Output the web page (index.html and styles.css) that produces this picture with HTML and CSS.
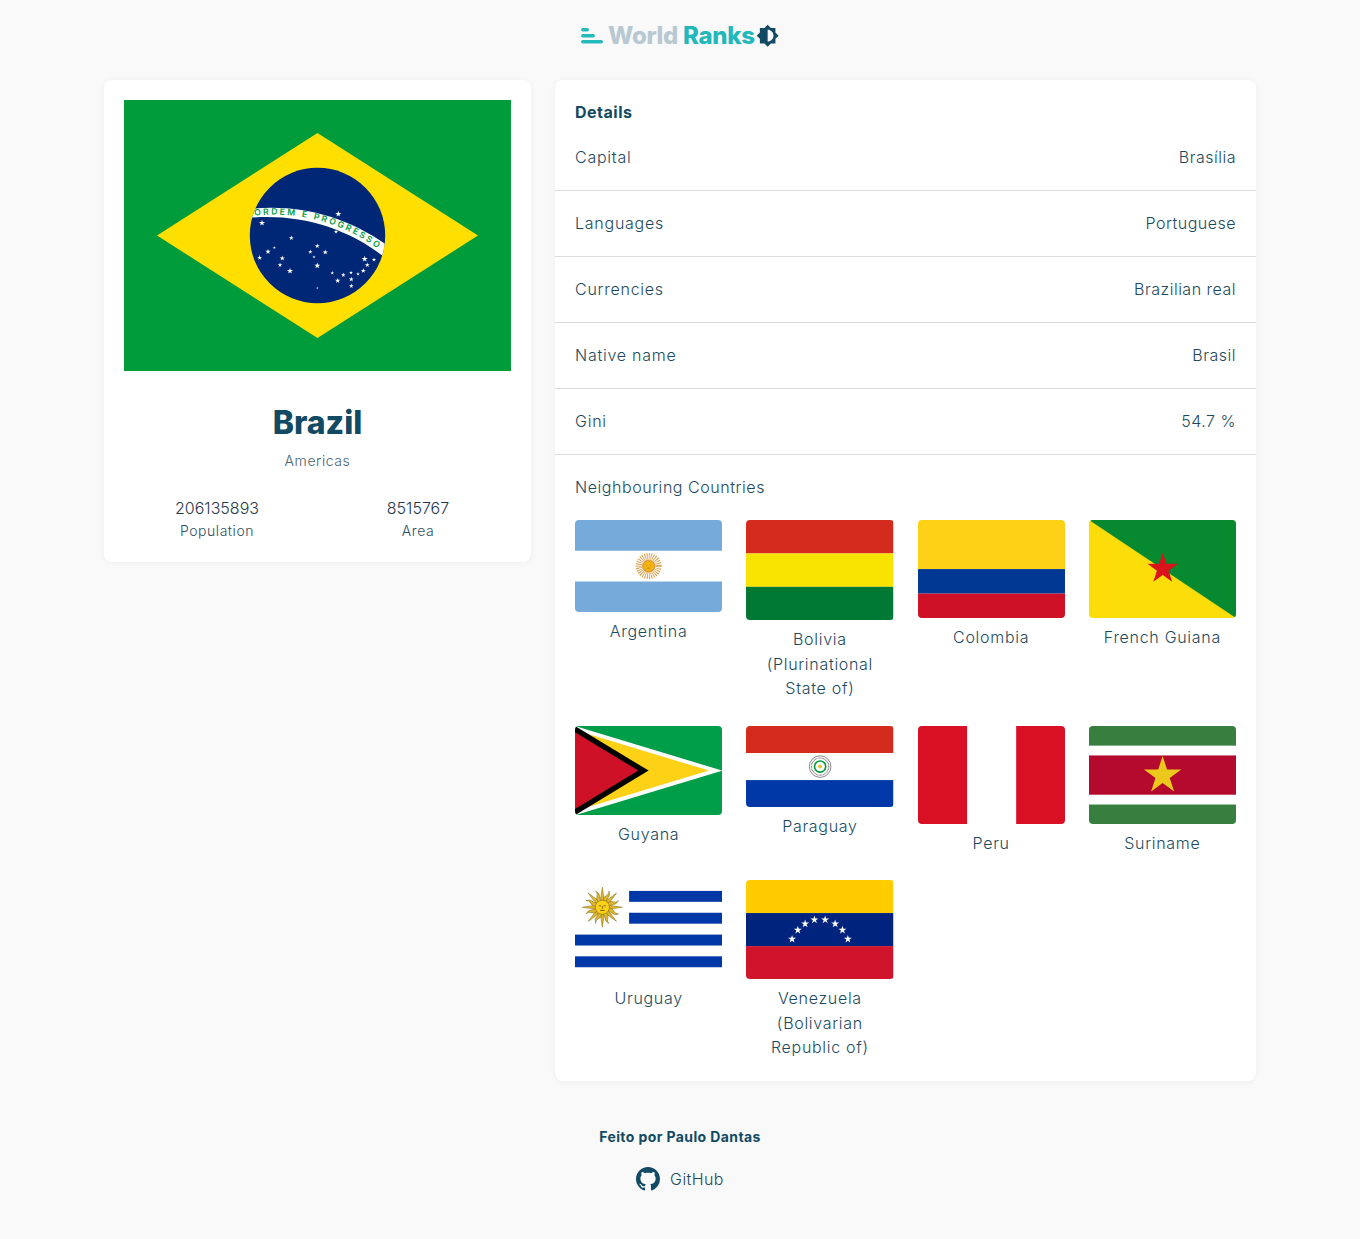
FILE: index.html
```html
<!DOCTYPE html>
<html lang="en">
<head>
<meta charset="utf-8">
<title>World Ranks</title>
<link rel="stylesheet" href="styles.css">
</head>
<body>
<header class="header">
  <div class="logo">
    <svg class="logo-bars" viewBox="0 0 22 16" aria-hidden="true"><rect x="0" y="0" width="8" height="3.6" rx="1.8"/><rect x="0" y="6" width="14" height="3.6" rx="1.8"/><rect x="0" y="12" width="22" height="3.6" rx="1.8"/></svg>
    <span class="logo-text"><span class="logo-world">World</span> <span class="logo-ranks">Ranks</span></span>
    <svg class="logo-theme" viewBox="0 0 24 24" aria-hidden="true"><path d="M20 15.31L23.31 12 20 8.69V4h-4.69L12 .69 8.69 4H4v4.69L.69 12 4 15.31V20h4.69L12 23.31 15.31 20H20v-4.69zM12 18V6c3.31 0 6 2.69 6 6s-2.69 6-6 6z"/></svg>
  </div>
</header>

<main class="main">
  <section class="card summary">
    <svg class="hero-flag" viewBox="0 0 387 271" role="img" aria-label="Brazil flag">
      <defs>
        <polygon id="star" points="0,-1 .2245,-.309 .951,-.309 .363,.118 .588,.809 0,.382 -.588,.809 -.363,.118 -.951,-.309 -.2245,-.309"/>
        <clipPath id="globe"><circle cx="193.5" cy="135.5" r="67.7"/></clipPath>
        <path id="motto" d="M130.5 115.8 C172 110.5 222 122.5 258.5 152.5"/>
      </defs>
      <rect width="387" height="271" fill="#009b3a"/>
      <polygon points="33,135.5 193.5,33 354,135.5 193.5,238" fill="#fedf00"/>
      <circle cx="193.5" cy="135.5" r="67.7" fill="#002776"/>
      <g clip-path="url(#globe)">
        <path d="M125 109 C172 103.5 222 115 264 146 L260 157 C222 126.5 172 113 123 118 Z" fill="#fff"/>
      </g>
      <text class="motto"><textPath href="#motto" textLength="130">ORDEM E PROGRESSO</textPath></text>
      <g fill="#fff">
        <use href="#star" transform="translate(214.3 114) scale(3.2)"/>
        <use href="#star" transform="translate(138 123) scale(3.2)"/>
        <use href="#star" transform="translate(212 131.7) scale(2.2)"/>
        <use href="#star" transform="translate(167.3 138) scale(2.6)"/>
        <use href="#star" transform="translate(193.3 146) scale(2.6)"/>
        <use href="#star" transform="translate(150.3 147.7) scale(1.6)"/>
        <use href="#star" transform="translate(144 151.7) scale(2.8)"/>
        <use href="#star" transform="translate(186.3 152) scale(2.2)"/>
        <use href="#star" transform="translate(201.3 152.3) scale(2.8)"/>
        <use href="#star" transform="translate(190 157) scale(1.6)"/>
        <use href="#star" transform="translate(135.7 157.7) scale(2.6)"/>
        <use href="#star" transform="translate(158.3 158.3) scale(2.8)"/>
        <use href="#star" transform="translate(240.7 159) scale(3.2)"/>
        <use href="#star" transform="translate(250 159.7) scale(2.2)"/>
        <use href="#star" transform="translate(243.3 165) scale(2.6)"/>
        <use href="#star" transform="translate(156 165) scale(2.4)"/>
        <use href="#star" transform="translate(193.3 165.7) scale(3.2)"/>
        <use href="#star" transform="translate(239.3 170.7) scale(2.6)"/>
        <use href="#star" transform="translate(166 171) scale(3.2)"/>
        <use href="#star" transform="translate(208.3 173) scale(2)"/>
        <use href="#star" transform="translate(227 172.7) scale(2)"/>
        <use href="#star" transform="translate(219.3 175) scale(2.4)"/>
        <use href="#star" transform="translate(234 174) scale(2)"/>
        <use href="#star" transform="translate(227.3 179.3) scale(2.6)"/>
        <use href="#star" transform="translate(213.7 180.7) scale(2.8)"/>
        <use href="#star" transform="translate(227.3 186) scale(2.4)"/>
        <use href="#star" transform="translate(193.3 188) scale(1.2)"/>
      </g>
    </svg>
    <h1 class="country-name">Brazil</h1>
    <p class="region">Americas</p>
    <div class="stats">
      <div class="stat"><span class="stat-value">206135893</span><span class="stat-label">Population</span></div>
      <div class="stat"><span class="stat-value">8515767</span><span class="stat-label">Area</span></div>
    </div>
  </section>

  <section class="card details">
    <h2 class="details-title">Details</h2>
    <dl class="rows">
      <div class="row"><dt>Capital</dt><dd>Brasília</dd></div>
      <div class="row"><dt>Languages</dt><dd>Portuguese</dd></div>
      <div class="row"><dt>Currencies</dt><dd>Brazilian real</dd></div>
      <div class="row"><dt>Native name</dt><dd>Brasil</dd></div>
      <div class="row"><dt>Gini</dt><dd>54.7 %</dd></div>
    </dl>
    <h3 class="neighbours-title">Neighbouring Countries</h3>
    <div class="neighbours">
      <figure class="neighbour">
        <svg class="flag" viewBox="0 0 147 92" role="img" aria-label="Argentina flag">
          <rect width="147" height="92" fill="#75aadb"/><rect y="30.7" width="147" height="30.7" fill="#fff"/>
          <circle cx="73.5" cy="46" r="9.8" fill="none" stroke="#dca65c" stroke-width="6.4" stroke-dasharray="1 1"/>
          <circle cx="73.5" cy="46" r="6.6" fill="#e0a03a"/>
          <circle cx="73.5" cy="46" r="4.8" fill="#f6b40e"/>
          <path d="M71.5 45h1M74.5 45h1M72 48h3" stroke="#b5761b" stroke-width=".7"/>
        </svg>
        <figcaption>Argentina</figcaption>
      </figure>
      <figure class="neighbour">
        <svg class="flag" viewBox="0 0 147 100" role="img" aria-label="Bolivia flag">
          <rect width="147" height="33.4" fill="#d52b1e"/><rect y="33.4" width="147" height="33.3" fill="#f9e300"/><rect y="66.7" width="147" height="33.3" fill="#007934"/>
        </svg>
        <figcaption>Bolivia (Plurinational State of)</figcaption>
      </figure>
      <figure class="neighbour">
        <svg class="flag" viewBox="0 0 147 98" role="img" aria-label="Colombia flag">
          <rect width="147" height="49" fill="#fcd116"/><rect y="49" width="147" height="24.5" fill="#003893"/><rect y="73.5" width="147" height="24.5" fill="#ce1126"/>
        </svg>
        <figcaption>Colombia</figcaption>
      </figure>
      <figure class="neighbour">
        <svg class="flag" viewBox="0 0 147 98" role="img" aria-label="French Guiana flag">
          <rect width="147" height="98" fill="#fcdd09"/><polygon points="0,0 147,0 147,98" fill="#078930"/>
          <use href="#star" transform="translate(73.6 48.7) scale(16)" fill="#da121a"/>
        </svg>
        <figcaption>French Guiana</figcaption>
      </figure>
      <figure class="neighbour">
        <svg class="flag" viewBox="0 0 500 303" role="img" aria-label="Guyana flag">
          <rect width="500" height="303" fill="#009e49"/>
          <polygon points="0,0 500,151.5 0,303" fill="#fff"/>
          <polygon points="0,14 455,151.5 0,289" fill="#fcd116"/>
          <polygon points="0,0 250,151.5 0,303" fill="#000"/>
          <polygon points="0,21 215,151.5 0,282" fill="#ce1126"/>
        </svg>
        <figcaption>Guyana</figcaption>
      </figure>
      <figure class="neighbour">
        <svg class="flag" viewBox="0 0 147 81" role="img" aria-label="Paraguay flag">
          <rect width="147" height="27" fill="#d52b1e"/><rect y="27" width="147" height="27" fill="#fff"/><rect y="54" width="147" height="27" fill="#0038a8"/>
          <circle cx="74" cy="40.5" r="10.8" fill="#fff" stroke="#555" stroke-width=".7"/>
          <circle cx="74" cy="40.5" r="8.6" fill="none" stroke="#777" stroke-width="1.2" stroke-dasharray=".8 .6"/>
          <circle cx="74" cy="40.5" r="5.6" fill="#fff" stroke="#009b3a" stroke-width="1.6"/>
          <circle cx="74" cy="40.5" r="2" fill="#e8c432"/>
        </svg>
        <figcaption>Paraguay</figcaption>
      </figure>
      <figure class="neighbour">
        <svg class="flag" viewBox="0 0 147 98" role="img" aria-label="Peru flag">
          <rect width="147" height="98" fill="#d91023"/><rect x="49" width="49" height="98" fill="#fff"/>
        </svg>
        <figcaption>Peru</figcaption>
      </figure>
      <figure class="neighbour">
        <svg class="flag" viewBox="0 0 147 98" role="img" aria-label="Suriname flag">
          <rect width="147" height="98" fill="#377e3f"/><rect y="19.6" width="147" height="58.8" fill="#fff"/><rect y="29.4" width="147" height="39.2" fill="#b40a2d"/>
          <use href="#star" transform="translate(73.5 49.5) scale(19.6)" fill="#ecc81d"/>
        </svg>
        <figcaption>Suriname</figcaption>
      </figure>
      <figure class="neighbour">
        <svg class="flag" viewBox="0 0 147 99" role="img" aria-label="Uruguay flag">
          <rect width="147" height="99" fill="#fff"/>
          <rect x="54" y="10.9" width="93" height="10.9" fill="#0038a8"/><rect x="54" y="32.7" width="93" height="10.9" fill="#0038a8"/>
          <rect y="54.5" width="147" height="10.9" fill="#0038a8"/><rect y="76.2" width="147" height="10.9" fill="#0038a8"/>
          <g transform="translate(27.3 27.2)" fill="#e0b72c" stroke="#7d6a14" stroke-width=".5">
            <path id="ray" d="M-2 -6.5 L0 -20 L2 -6.5 Z"/>
            <use href="#ray" transform="rotate(45)"/><use href="#ray" transform="rotate(90)"/><use href="#ray" transform="rotate(135)"/><use href="#ray" transform="rotate(180)"/><use href="#ray" transform="rotate(225)"/><use href="#ray" transform="rotate(270)"/><use href="#ray" transform="rotate(315)"/>
            <path id="wray" d="M-2 -6.5 Q-3 -10 -.6 -12.5 Q1.6 -15 0 -17.5 Q3 -14 1.6 -11 Q.8 -9 2 -6.5 Z" transform="rotate(22.5)"/>
            <use href="#wray" transform="rotate(45)"/><use href="#wray" transform="rotate(90)"/><use href="#wray" transform="rotate(135)"/><use href="#wray" transform="rotate(180)"/><use href="#wray" transform="rotate(225)"/><use href="#wray" transform="rotate(270)"/><use href="#wray" transform="rotate(315)"/>
            <circle r="7" fill="#fcd116"/>
            <path d="M-3.4 -1.4h2.2M1.2 -1.4h2.2M0 -1v2.6M-2.2 3.2h4.4" fill="none" stroke="#5e4c0c" stroke-width=".8"/>
          </g>
        </svg>
        <figcaption>Uruguay</figcaption>
      </figure>
      <figure class="neighbour">
        <svg class="flag" viewBox="0 0 147 99" role="img" aria-label="Venezuela flag">
          <rect width="147" height="33" fill="#ffcc00"/><rect y="33" width="147" height="33" fill="#00247d"/><rect y="66" width="147" height="33" fill="#cf142b"/>
          <g fill="#fff">
            <use href="#star" transform="translate(46 59) scale(4.2)"/>
            <use href="#star" transform="translate(51.7 50) scale(4.2)"/>
            <use href="#star" transform="translate(59 43.7) scale(4.2)"/>
            <use href="#star" transform="translate(68.3 39.7) scale(4.2)"/>
            <use href="#star" transform="translate(79 39.7) scale(4.2)"/>
            <use href="#star" transform="translate(89 43.7) scale(4.2)"/>
            <use href="#star" transform="translate(96.3 50) scale(4.2)"/>
            <use href="#star" transform="translate(101.7 59) scale(4.2)"/>
          </g>
        </svg>
        <figcaption>Venezuela (Bolivarian Republic of)</figcaption>
      </figure>
    </div>
  </section>
</main>

<footer class="footer">
  <p class="credit">Feito por Paulo Dantas</p>
  <a class="github" href="#">
    <svg class="github-icon" viewBox="0 0 16 16" aria-hidden="true"><path d="M8 0C3.58 0 0 3.58 0 8c0 3.54 2.29 6.53 5.47 7.59.4.07.55-.17.55-.38 0-.19-.01-.82-.01-1.49-2.01.37-2.53-.49-2.69-.94-.09-.23-.48-.94-.82-1.13-.28-.15-.68-.52-.01-.53.63-.01 1.08.58 1.23.82.72 1.21 1.87.87 2.33.66.07-.52.28-.87.51-1.07-1.78-.2-3.64-.89-3.64-3.95 0-.87.31-1.59.82-2.15-.08-.2-.36-1.02.08-2.12 0 0 .67-.21 2.2.82.64-.18 1.32-.27 2-.27s1.36.09 2 .27c1.53-1.04 2.2-.82 2.2-.82.44 1.1.16 1.92.08 2.12.51.56.82 1.27.82 2.15 0 3.07-1.87 3.75-3.65 3.95.29.25.54.73.54 1.48 0 1.07-.01 1.93-.01 2.2 0 .21.15.46.55.38A8.013 8.013 0 0016 8c0-4.42-3.58-8-8-8z"/></svg>
    <span>GitHub</span>
  </a>
</footer>
</body>
</html>
```

FILE: styles.css
```css
* { box-sizing: border-box; }

html, body { margin: 0; padding: 0; }

body {
  background: #f9f9f9;
  color: #1c4a60;
  font-family: "Inter", "Liberation Sans", sans-serif;
  font-size: 16px;
  font-weight: 350;
  letter-spacing: 0.42px;
  line-height: 24px;
  min-height: 1239px;
}

.header {
  display: flex;
  justify-content: center;
  align-items: center;
  height: 80px;
  padding-bottom: 8px;
}

.logo {
  display: flex;
  align-items: center;
  gap: 5px;
}

.logo-bars { width: 22px; height: 16px; fill: #25b9bc; }

.logo-text {
  font-size: 24px;
  font-weight: 800;
  letter-spacing: -0.3px;
  line-height: 30px;
  white-space: nowrap;
  margin-right: -4px;
}

.logo-world { color: #b8c8d2; }
.logo-ranks { color: #22b8bb; }

.logo-theme { width: 23.3px; height: 23.3px; fill: #124a63; }

.main {
  display: flex;
  align-items: flex-start;
  gap: 24px;
  width: 1152px;
  margin: 0 auto;
}

.card {
  background: #fff;
  border-radius: 8px;
  box-shadow: 0 1px 6px rgba(0, 0, 0, 0.05);
}

.summary {
  flex: 0 0 427px;
  min-width: 0;
  height: 482px;
  padding: 20px;
  text-align: center;
}

.hero-flag { display: block; width: 387px; height: 271px; }

.motto {
  font-family: "Inter", "Liberation Sans", sans-serif;
  font-size: 8.6px;
  font-weight: 600;
  letter-spacing: 0;
  fill: #009b3a;
}

.country-name {
  margin: 32px 0 0;
  font-size: 32px;
  font-weight: 800;
  letter-spacing: 0;
  line-height: 40px;
  color: #124a63;
}

.region {
  margin: 8px 0 0;
  font-size: 14px;
  font-weight: 300;
  letter-spacing: 0.6px;
  line-height: 20px;
  color: #4a6472;
}

.stats {
  display: grid;
  grid-template-columns: 1fr 1fr;
  margin: 25px -7.5px 0;
}

.stat { display: flex; flex-direction: column; align-items: center; }

.stat-value { font-size: 16px; font-weight: 300; letter-spacing: 0; line-height: 24px; color: #26384a; }

.stat-label { font-size: 14px; letter-spacing: 0.55px; line-height: 22px; color: #2e5064; }

.details { flex: 0 0 701px; min-width: 0; overflow: hidden; padding-top: 20px; padding-bottom: 21px; }

.details-title {
  margin: 0 0 1px;
  padding: 0 20px;
  font-size: 16px;
  font-weight: 700;
  letter-spacing: 0.5px;
  line-height: 24px;
  color: #124a63;
}

.rows { margin: 0; }

.row {
  display: flex;
  justify-content: space-between;
  padding: 20px 20px 21px;
  border-bottom: 1px solid #dcdcdc;
}

.row dt { margin: 0; letter-spacing: 0.75px; }
.row dd { margin: 0; letter-spacing: 0.5px; }

.neighbours-title {
  margin: 20px 0 21px;
  padding: 0 20px;
  font-size: 16px;
  font-weight: 350;
  letter-spacing: 0.55px;
  line-height: 24px;
}

.neighbours {
  display: grid;
  grid-template-columns: repeat(4, 1fr);
  gap: 25px 24px;
  padding: 0 20px;
}

.neighbour { margin: 0; text-align: center; }

.flag { display: block; width: 100%; height: auto; border-radius: 4px; }

.neighbour figcaption {
  margin-top: 7px;
  letter-spacing: 0.7px;
  line-height: 24.5px;
  padding: 0 4px;
}

.footer {
  display: flex;
  flex-direction: column;
  align-items: center;
  margin-top: 44px;
}

.credit {
  margin: 0;
  font-size: 14px;
  font-weight: 700;
  letter-spacing: 0.4px;
  line-height: 24px;
  color: #124a63;
}

.github {
  display: flex;
  align-items: center;
  gap: 10px;
  margin-top: 18px;
  color: #1c4a60;
  text-decoration: none;
}

.github-icon { width: 24px; height: 24px; fill: #124a63; }
```
